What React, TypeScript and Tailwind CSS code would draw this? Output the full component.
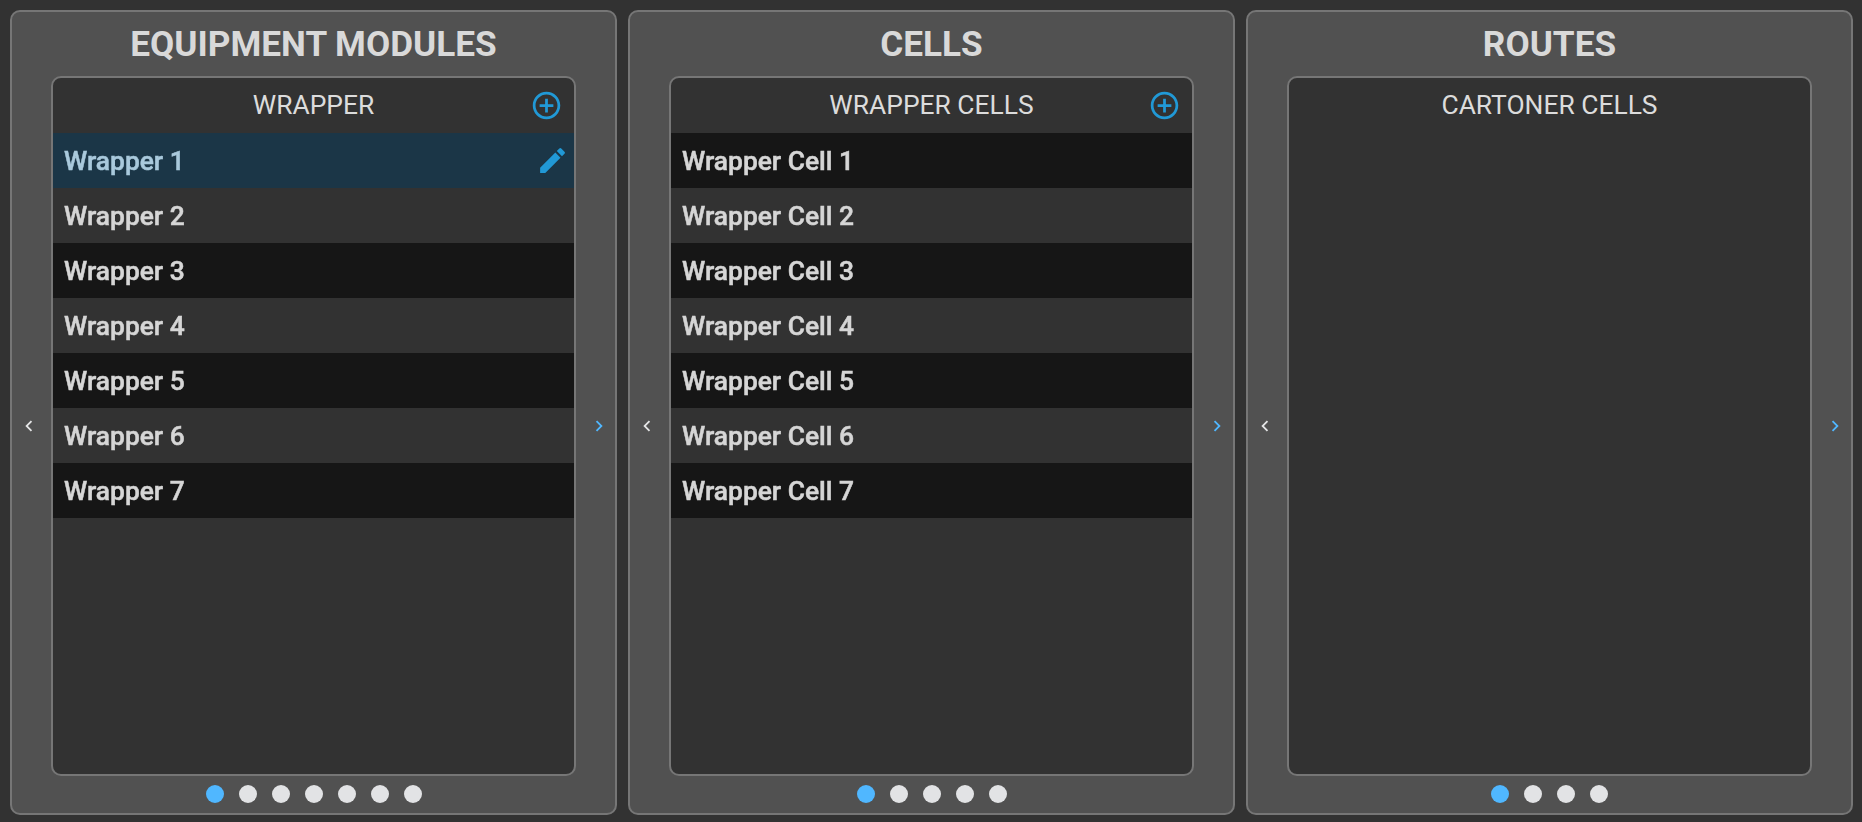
import { MdAddCircleOutline, MdChevronLeft, MdChevronRight, MdEdit } from 'react-icons/md';

type PanelProps = {
  title: string;
  subtitle: string;
  items: string[];
  pages: number;
  canAdd?: boolean;
  selected?: number;
};

function Panel({ title, subtitle, items, pages, canAdd = false, selected = -1 }: PanelProps) {
  return (
    <section className="flex h-[805px] w-[607px] shrink-0 flex-col rounded-[10px] border-2 border-[#767676] bg-[#515151]">
      <h2 className="flex h-16 shrink-0 items-center justify-center text-[35.2px] font-bold text-[#d9d9d9]">
        {title}
      </h2>
      <div className="flex h-[700px] shrink-0">
        <button className="flex w-[39px] shrink-0 items-center pb-px pl-[6px] text-[#e4e5e6]" aria-label="Previous">
          <MdChevronLeft size={22} />
        </button>
        <div className="flex w-[525px] shrink-0 flex-col overflow-hidden rounded-[10px] border-2 border-[#767676] bg-[#323232]">
          <header className="grid h-[55px] shrink-0 grid-cols-[44px_1fr_44px] items-center text-[#dcdcdc]">
            <h3 className="col-start-2 text-center text-[26.4px] leading-none">{subtitle}</h3>
            {canAdd && (
              <button className="text-[#2199d6]" aria-label="Add">
                <MdAddCircleOutline size={33} />
              </button>
            )}
          </header>
          <ul className="will-change-transform">
            {items.map((item, i) => (
              <li
                key={item}
                className={`flex h-[55px] items-center justify-between pr-[5px] pl-[11px] text-[26.4px] font-medium ${
                  i === selected
                    ? 'bg-[#1b3647] text-[#a9c9dc]'
                    : i % 2 === 0
                      ? 'bg-[#161616] text-[#d6d6d6]'
                      : 'text-[#d6d6d6]'
                }`}
              >
                <span className="pt-px leading-10 [-webkit-text-stroke:0.5px_currentColor]">{item}</span>
                {i === selected && <MdEdit size={33} className="text-[#2199d6]" />}
              </li>
            ))}
          </ul>
        </div>
        <button className="flex w-[39px] shrink-0 items-center justify-end pr-[5px] pb-px text-[#50b7ff]" aria-label="Next">
          <MdChevronRight size={22} />
        </button>
      </div>
      <div className="flex flex-1 items-center justify-center gap-[15px] pb-0.5">
        {Array.from({ length: pages }, (_, i) => (
          <span key={i} className={`size-[18px] rounded-full ${i === 0 ? 'bg-[#50b7ff]' : 'bg-[#e2e3e5]'}`} />
        ))}
      </div>
    </section>
  );
}

const numbered = (label: string) => Array.from({ length: 7 }, (_, i) => `${label} ${i + 1}`);

export default function App() {
  return (
    <main className="flex h-screen gap-[11px] overflow-hidden bg-[#323232] p-[10px] font-['Roboto',sans-serif]">
      <Panel title="EQUIPMENT MODULES" subtitle="WRAPPER" items={numbered('Wrapper')} pages={7} canAdd selected={0} />
      <Panel title="CELLS" subtitle="WRAPPER CELLS" items={numbered('Wrapper Cell')} pages={5} canAdd />
      <Panel title="ROUTES" subtitle="CARTONER CELLS" items={[]} pages={4} />
    </main>
  );
}
